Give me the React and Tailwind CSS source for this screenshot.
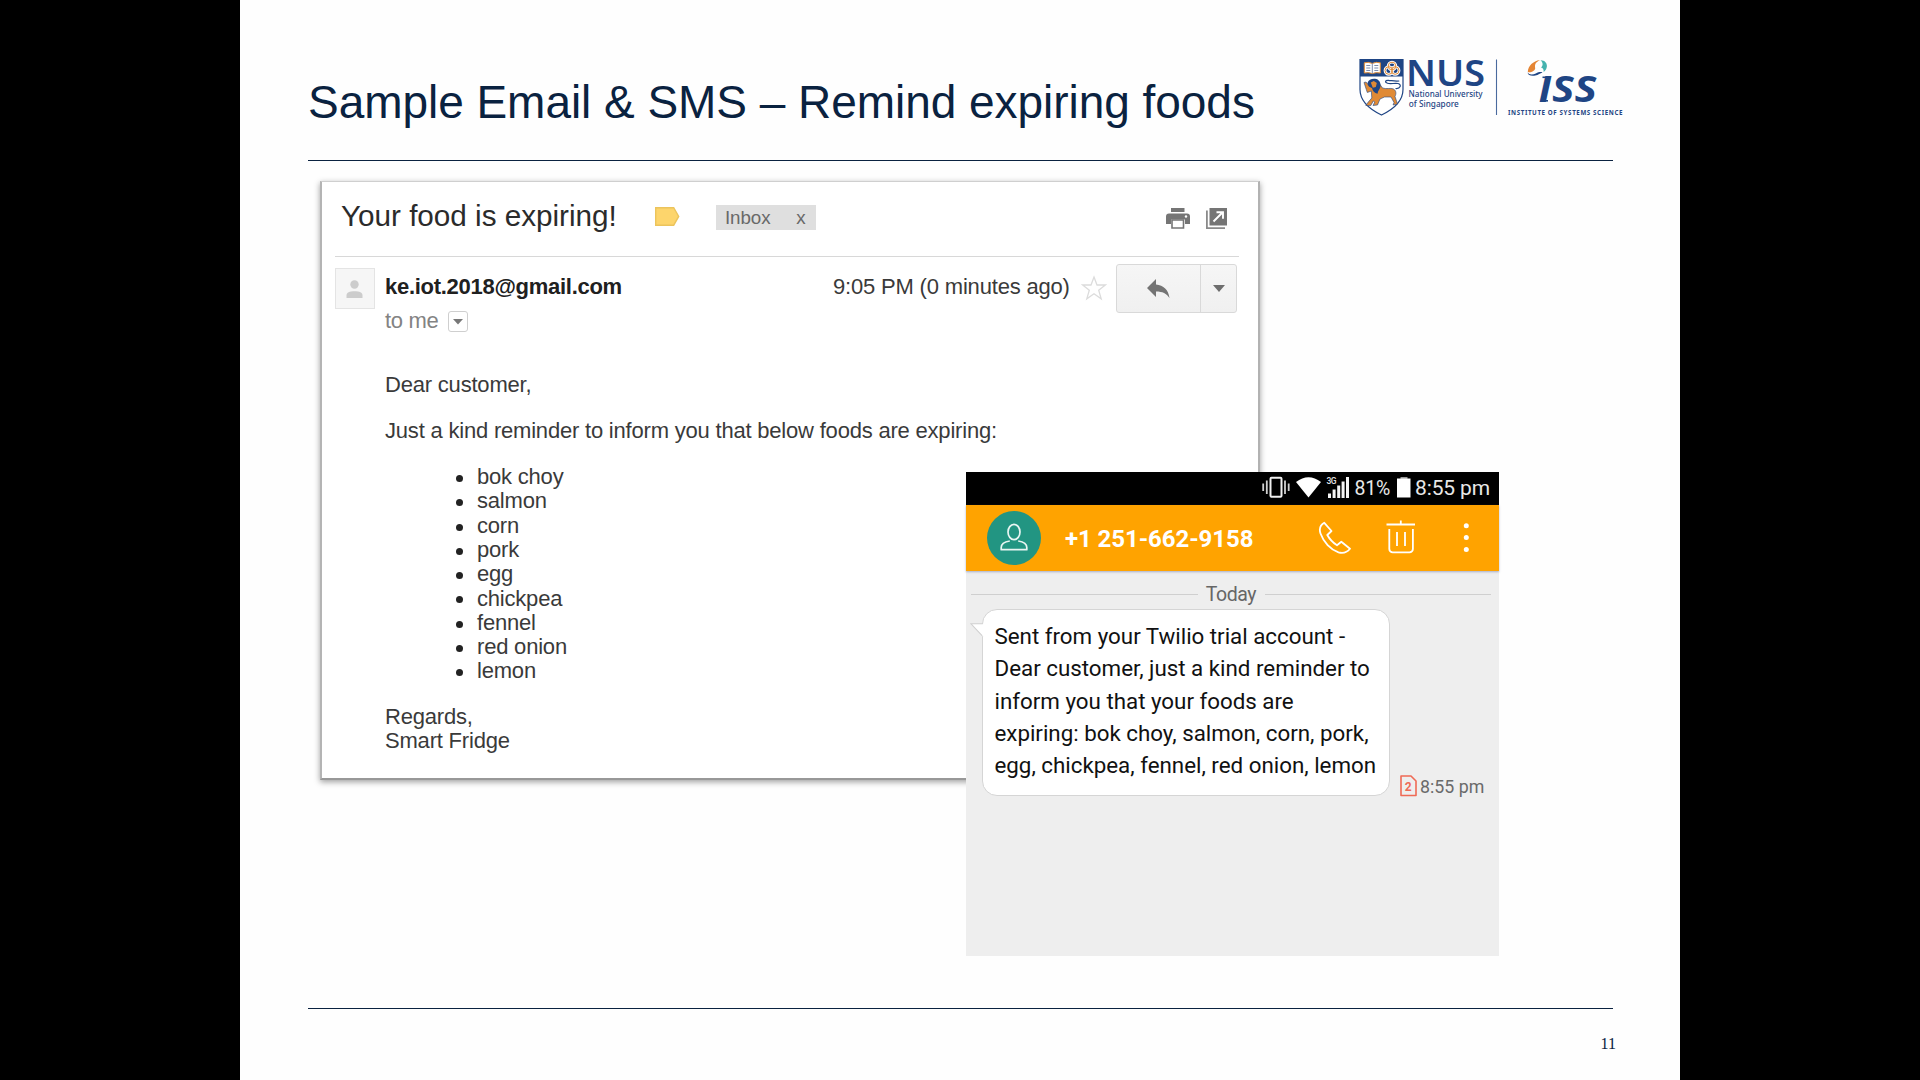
const FOODS = [
  "bok choy",
  "salmon",
  "corn",
  "pork",
  "egg",
  "chickpea",
  "fennel",
  "red onion",
  "lemon",
];

const SMS_LINES = [
  "Sent from your Twilio trial account -",
  "Dear customer, just a kind reminder to",
  "inform you that your foods are",
  "expiring: bok choy, salmon, corn, pork,",
  "egg, chickpea, fennel, red onion, lemon",
];

function Logos() {
  return (
    <svg width="270" height="80" viewBox="1355 40 270 80" className="shrink-0">
      {/* crest */}
      <path d="M1360 59.500h43v30c0 12-9 19.500-21.500 25.500c-12.500-6-21.500-13.500-21.500-25.500z" fill="#fff" stroke="#1f4584" strokeWidth="1.200" />
      <path d="M1360 59.500h43v17h-43z" fill="#1f4584" />
      <path d="M1364.300 62.800q4-1.200 8 .6q4-1.800 8-.6v10.200q-4-1-8 .6q-4-1.600-8-.6z" fill="#fff" stroke="#e08a35" strokeWidth="1" />
      <path d="M1372.300 63.500v10M1366.300 65.500h4M1366.300 68h4M1366.300 70.500h4M1374.300 65.500h4M1374.300 68h4M1374.300 70.500h4" stroke="#6f7fa5" strokeWidth="0.900" fill="none" />
      <g fill="none">
        <g stroke="#fff" strokeWidth="2.800">
          <circle cx="1392" cy="66" r="3.800" />
          <circle cx="1388.800" cy="70.500" r="3.800" />
          <circle cx="1395.200" cy="70.500" r="3.800" />
        </g>
        <g stroke="#e08a35" strokeWidth="1">
          <circle cx="1392" cy="66" r="3.800" />
          <circle cx="1388.800" cy="70.500" r="3.800" />
          <circle cx="1395.200" cy="70.500" r="3.800" />
        </g>
      </g>
      {/* lion */}
      <path
        d="M1364 82.500l2-.5l2 2.500l3.500-.5l6-3l5 7c4 1.500 8-.5 11 1c3 1.800 2.800 5 1.500 7.500l2.500 7.500l-4.500 1l1-2.500l-3-5.500l-6.500 0l-4.500 2l-2.500 6l-4.500 .5l1.800-3.500l-1.500-1l-2.500 4.500l-5 0l2.500-3.500l3.500-4l-.5-7l-4 1.500l-1-3z"
        fill="#e08a35"
        stroke="#1f4584"
        strokeWidth="0.600"
      />
      <path d="M1367.500 83c1-3.500 4-4.500 7.500-4.300c4 .4 6 4 5.500 7.500c-.4 3-2.500 4-3 7.500c-3-.8-5-2.800-5.500-5.800c-2-.4-4.500-2-4.500-4.900z" fill="#1f4584" />
      <path d="M1370.800 82.500l3-1.500l3 2l-1 4l-3 .8z" fill="#e08a35" />
      <path d="M1395.500 88.500c5 .5 6.500-4 2.500-5c-4-.8-7 1-10.500-.3c-3-1-2.500-3 .8-2.900c3.500.2 6 1.300 11 .7" fill="none" stroke="#1f4584" strokeWidth="1.200" />

      <text x="1406" y="85.500" fontFamily="'Noto Sans', sans-serif" fontWeight="600" fontSize="36" textLength="79" lengthAdjust="spacingAndGlyphs" fill="#1f4584">NUS</text>
      <text x="1408.600" y="97.400" fontFamily="'Noto Sans', sans-serif" fontWeight="500" fontSize="8" textLength="74" lengthAdjust="spacingAndGlyphs" fill="#1f4584">National University</text>
      <text x="1408.800" y="107.400" fontFamily="'Noto Sans', sans-serif" fontWeight="500" fontSize="8" textLength="50" lengthAdjust="spacingAndGlyphs" fill="#1f4584">of Singapore</text>
      <path d="M1496.500 59.500v55.500" stroke="#4a6a9e" strokeWidth="1.100" />

      {/* ISS swirl */}
      <path d="M1527.800 71.500c.5-5.500 5-10.500 12.200-11.500c-5 2.500-5.300 5-4.800 8c.2 2-2.700 4-4.700 4.300c-1.500.2-2.500 0-2.700-.8z" fill="#e58534" />
      <path d="M1540.500 60.200c4-.2 6.800 2.800 6.400 6.300c-.3 2.500-1.600 4.500-3.300 5.500c.4-2.500-.6-4-2.600-4.600c2.500-2 2-5-.5-7.200z" fill="#45b3ae" />
      <path d="M1527.600 72.500c1.200 2.300 5 2.500 8.200 1c2.700-1.300 4.700-1.800 6.700-1.100c-2.500.6-4 2.500-7.200 3.200c-4.200.8-7.500-.4-7.700-3.100z" fill="#1f4584" />
      <text x="1538.500" y="101.600" fontFamily="'Noto Sans', sans-serif" fontStyle="italic" fontWeight="600" fontSize="46.500" textLength="59" lengthAdjust="spacingAndGlyphs" fill="#1f4584">ıss</text>
      <path d="M1542.500 77.300h6" stroke="#1f4584" strokeWidth="1.600" />
      <path d="M1541.500 100.800h6.500" stroke="#1f4584" strokeWidth="1.600" />
      <text x="1508" y="115.300" fontFamily="'Noto Sans', sans-serif" fontWeight="700" fontSize="6.200" textLength="114.500" fill="#1f4584">INSTITUTE OF SYSTEMS SCIENCE</text>
    </svg>
  );
}

function PrintIcon() {
  return (
    <svg width="24" height="21" viewBox="0 0 24 21" className="block">
      <path d="M5 0h13.500v4H5z" fill="#757575" />
      <path d="M3 5.500h18a3 3 0 0 1 3 3V16h-5v-4.500H5V16H0V8.500a3 3 0 0 1 3-3z" fill="#757575" />
      <circle cx="20" cy="8.500" r="1.200" fill="#fff" />
      <path d="M6 12h11.500v8H6z" fill="#fff" stroke="#757575" strokeWidth="1.600" />
    </svg>
  );
}

function PopOutIcon() {
  return (
    <svg width="21" height="21" viewBox="0 0 21 21" className="block">
      <path d="M3.500 0H21v17.500H3.500z" fill="#757575" />
      <path d="M.9 2.500v17.600H19" fill="none" stroke="#8a8a8a" strokeWidth="1.800" />
      <path d="M7.500 13.500l9-9M10.500 4.300h6.500v6.500" fill="none" stroke="#fff" strokeWidth="1.900" />
    </svg>
  );
}

function EmailCard() {
  return (
    <article className="ml-[80px] flex h-[599px] w-[940px] flex-col border-t border-r-2 border-b-2 border-l-2 border-t-[#cfcfcf] border-r-[#b2b2b2] border-b-[#989898] border-l-[#b4b4b4] bg-white font-['Liberation_Sans',Arial,sans-serif] text-[22px] leading-[24.3px] tracking-[-0.2px] text-[#3a3a3a] shadow-[0_2px_6px_rgba(0,0,0,0.38)]">
      <header className="flex h-[74px] items-start pt-[14px] pl-[19px]">
        <h2 className="w-[314px] text-[29.7px] leading-10 tracking-[-0.020px] text-[#2b2b2b]">Your food is expiring!</h2>
        <svg width="25" height="20" viewBox="0 0 25 20" className="mt-[11px] block">
          <path d="M.7.7h18l5 8.700l-5 8.800H.7z" fill="#fdd56c" stroke="#ecc45c" strokeWidth="1.400" />
        </svg>
        <span className="mt-[9px] ml-9 flex h-[25px] w-[99.500px] justify-between bg-[#dfdfdf] pr-[10px] pl-[9px] text-[18.800px] leading-[25px] tracking-[-0.100px] text-[#696969]">
          <span>Inbox</span>
          <span>x</span>
        </span>
        <span className="mt-3 ml-[350px] flex gap-4">
          <PrintIcon />
          <PopOutIcon />
        </span>
      </header>
      <div className="ml-[13px] h-px w-[904px] bg-[#d8d8d8]" />

      <div className="flex h-[116px] items-start pl-[13px]">
        <div className="mt-[11px] flex h-[41px] w-10 items-center justify-center border border-[#e4e4e4] bg-[#f6f6f6]">
          <svg width="17" height="19" viewBox="0 0 17 19" className="mt-[2px] -ml-px">
            <circle cx="8.500" cy="4.500" r="4.200" fill="#cccccc" />
            <path d="M.5 18v-2.500C.5 12.500 3.500 11.300 8.500 11.300s8 1.200 8 4.200V18z" fill="#cccccc" />
          </svg>
        </div>
        <div className="mt-[17px] ml-[10px] w-[448px]">
          <div className="leading-[26px] font-bold tracking-[-0.280px] text-[#202020]">ke.iot.2018@gmail.com</div>
          <div className="mt-2 flex h-[26px] items-center leading-[26px] text-[#838383]">
            <span className="tracking-[-0.300px]">to me</span>
            <span className="mt-px ml-[9px] flex h-[21px] w-5 items-center justify-center rounded-[3px] border-[1.500px] border-[#cfcfcf]">
              <svg width="10" height="6" viewBox="0 0 10 6">
                <path d="M0 0h10L5 5.500z" fill="#777" />
              </svg>
            </span>
          </div>
        </div>
        <div className="mt-[17px] w-[248px] leading-[26px] tracking-[-0.180px]">9:05 PM (0 minutes ago)</div>
        <svg width="26" height="26" viewBox="0 0 26 26" className="mt-[17.500px] block">
          <path d="M13 2l3 8h8.300l-6.600 5.200l2.500 8.600L13 18.800l-7.200 5l2.500-8.600L1.700 10H10z" fill="none" stroke="#dcdcdc" strokeWidth="1.300" />
        </svg>
        <div className="mt-[7px] ml-[9px] flex h-[49px] w-[121px] rounded-[3px] border border-[#d9d9d9] bg-gradient-to-b from-[#f6f6f6] to-[#f0f0f0]">
          <div className="flex w-[83px] items-center justify-center">
            <svg width="23" height="20" viewBox="0 0 23 20">
              <path d="M9 0v5.500C16.500 6 21.500 11 22.500 19C19.500 14.500 15.500 12.500 9 12.500V18L0 9z" fill="#747474" />
            </svg>
          </div>
          <div className="flex flex-1 items-center justify-center border-l border-[#d9d9d9]">
            <svg width="12" height="7" viewBox="0 0 12 7">
              <path d="M0 0h12L6 7z" fill="#6e6e6e" />
            </svg>
          </div>
        </div>
      </div>

      <div className="pl-[63px]">
        <p>Dear customer,</p>
        <p className="mt-[21.700px]">Just a kind reminder to inform you that below foods are expiring:</p>
        <ul className="mt-[21.800px] pl-[71px]">
          {FOODS.map((food) => (
            <li key={food} className="flex items-center gap-[14px]">
              <span className="mt-[2.500px] size-[7px] rounded-full bg-[#222]" />
              {food}
            </li>
          ))}
        </ul>
        <p className="mt-[21.200px]">
          Regards,
          <br />
          Smart Fridge
        </p>
      </div>
    </article>
  );
}

function StatusBar() {
  return (
    <div className="flex h-[33px] items-start bg-black text-[#e8e8e8]">
      <svg width="93" height="33" viewBox="1260 472 93 33" className="ml-[294px] block">
        <rect x="1270.500" y="477.800" width="11" height="19" rx="1" fill="none" stroke="#f0f0f0" strokeWidth="2" />
        <path d="M1266.800 480.500v13.500M1263.200 483.500v7.500M1285 480.500v13.500M1288.700 483.500v7.500" stroke="#d0d0d0" strokeWidth="1.800" />
        <path d="M1296 482q12.500-9.500 25 0l-12.500 15.500z" fill="#fff" />
        <path d="M1328 493.500h3v4.500h-3zM1332.600 489.500h3v8.500h-3zM1337.200 485.500h3v12.500h-3zM1341.600 481.500h3v16.500h-3zM1346 477h3v21h-3z" fill="#f4f4f4" />
        <text x="1326.500" y="484" fontFamily="Roboto, sans-serif" fontSize="8.500" fontWeight="600" textLength="10" fill="#ddd">3G</text>
      </svg>
      <span className="ml-[1.500px] w-[42px] text-[19.500px] leading-[33px] tracking-[-0.200px]">81%</span>
      <svg width="14" height="21" viewBox="0 0 14 21" className="mt-[5px] block">
        <path d="M3.500 0h7v2h-7z" fill="#999" />
        <path d="M0 1.500h13.500V20.500H0z" fill="#fff" />
      </svg>
      <span className="ml-[4.500px] text-[21px] leading-[33px] tracking-[-0.120px]">8:55 pm</span>
    </div>
  );
}

function PhoneScreen() {
  return (
    <aside className="absolute top-[311px] left-[726px] h-[484px] w-[533px] bg-[#eeeeee] font-[Roboto,sans-serif]">
      <StatusBar />
      <div className="flex h-[66px] items-center bg-[#ffa300] pl-[21px] shadow-[0_1px_2px_rgba(120,130,170,0.6)]">
        <svg width="54" height="54" viewBox="0 0 54 54" className="block">
          <circle cx="27" cy="27" r="27" fill="#229582" />
          <g fill="none" stroke="#e8f5f2" strokeWidth="1.700" strokeLinejoin="round">
            <ellipse cx="27" cy="21" rx="6" ry="7.600" />
            <path d="M22.800 30C17.500 30.800 14.200 33.500 14.200 36.500V38.700H39.800V36.500C39.800 33.500 36.500 30.800 31.200 30" />
          </g>
        </svg>
        <span className="ml-6 w-[253px] pt-[2px] text-[24px] leading-8 font-bold tracking-[-0.070px] text-white">+1 251-662-9158</span>
        <svg width="152" height="36" viewBox="1318 520 152 36" className="block">
          <g fill="none" stroke="#fff" strokeWidth="1.800" strokeLinejoin="round">
            <path d="M1324.300 522.800C1320.500 525 1319 529 1320.500 533.500C1323.500 542 1330.500 549.500 1338.500 552.300C1343 553.600 1347.500 551.800 1350 548.700L1341.300 541.700L1337 545.300C1333.500 543 1329.500 539 1327.300 535L1331.500 531Z" />
            <path d="M1389.300 529v20a3.400 3.400 0 0 0 3.400 3.400h16.800a3.400 3.400 0 0 0 3.400-3.400V529M1386.500 524.500h28.500M1400.800 520.500v4M1397 532v14M1405 532v14" />
          </g>
          <g fill="#fff">
            <circle cx="1466.300" cy="525.700" r="2.500" />
            <circle cx="1466.300" cy="537.500" r="2.500" />
            <circle cx="1466.300" cy="549.400" r="2.500" />
          </g>
        </svg>
      </div>

      <div className="mt-[11px] flex h-6 items-center px-[5px]">
        <span className="mr-[3px] h-px flex-1 bg-[#cfcfcf]" />
        <span className="w-[62px] pt-[2px] pr-px text-center text-[19.500px] leading-6 tracking-[-0.450px] text-[#666]">Today</span>
        <span className="mr-[3px] ml-[2px] h-px flex-1 bg-[#cfcfcf]" />
      </div>

      <div className="mt-[3px] flex items-end pl-[16px]">
        <div className="relative h-[187px] w-[408px] rounded-[15px] border border-[#d5d5d5] bg-white pt-[10px] pl-[11.500px] text-[22.350px] leading-[32.250px] tracking-[-0.010px] text-[#111]">
          <svg width="15" height="16" viewBox="0 0 15 16" className="absolute top-[13px] -left-[13.500px]">
            <path d="M13.500 .8H1l12.500 13.500z" fill="#fff" />
            <path d="M13 .8H1l12 12.800" fill="none" stroke="#d0d0d0" strokeWidth="1.100" />
            <path d="M12.500 1.400h2.500v12h-2.500z" fill="#fff" />
          </svg>
          {SMS_LINES.map((line) => (
            <div key={line} className="whitespace-nowrap">{line}</div>
          ))}
        </div>
        <svg width="17" height="22" viewBox="0 0 17 22" className="mb-[-1px] ml-[10px] block">
          <path d="M1 1h10l5 5v14.500H1z" fill="none" stroke="#ef6a55" strokeWidth="1.600" strokeLinejoin="round" />
          <text x="8.300" y="16" textAnchor="middle" fontFamily="Roboto, sans-serif" fontWeight="700" fontSize="12" fill="#ef6a55">2</text>
        </svg>
        <span className="-mb-px ml-[3px] text-[17.800px] leading-[21px] text-[#6a6a6a]">8:55 pm</span>
      </div>
    </aside>
  );
}

export default function App() {
  return (
    <div className="flex h-[1080px] w-[1920px] justify-center overflow-hidden bg-black">
      <main className="flex h-full w-[1440px] flex-col bg-[#fefefe]">
        <header className="ml-[68px] flex h-40 w-[1317px] items-start justify-between">
          <h1 className="pt-[74px] font-['Liberation_Sans',Arial,sans-serif] text-[46px] leading-[56px] tracking-[-0.040px] whitespace-nowrap text-[#0a2240]">
            Sample Email &amp; SMS – Remind expiring foods
          </h1>
          <div className="pt-10">
            <Logos />
          </div>
        </header>
        <div className="ml-[68px] h-px w-[1305px] bg-[#0a2240]" />
        <section className="relative h-[847px] pt-5">
          <EmailCard />
          <PhoneScreen />
        </section>
        <div className="ml-[68px] h-px w-[1305px] bg-[#0a2240]" />
        <footer className="flex justify-end pt-[25px] pr-[64px] font-['Liberation_Serif',serif] text-[16px] leading-5 text-[#0a2240]">11</footer>
      </main>
    </div>
  );
}
